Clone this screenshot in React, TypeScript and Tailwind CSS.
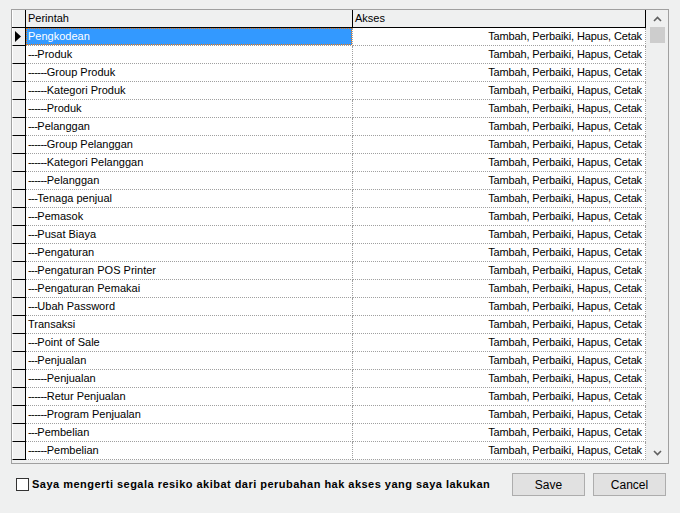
import React from 'react';

const rows: string[] = [
  'Pengkodean',
  '---Produk',
  '------Group Produk',
  '------Kategori Produk',
  '------Produk',
  '---Pelanggan',
  '------Group Pelanggan',
  '------Kategori Pelanggan',
  '------Pelanggan',
  '---Tenaga penjual',
  '---Pemasok',
  '---Pusat Biaya',
  '---Pengaturan',
  '---Pengaturan POS Printer',
  '---Pengaturan Pemakai',
  '---Ubah Password',
  'Transaksi',
  '---Point of Sale',
  '---Penjualan',
  '------Penjualan',
  '------Retur Penjualan',
  '------Program Penjualan',
  '---Pembelian',
  '------Pembelian',
];

const AKSES = 'Tambah, Perbaiki, Hapus, Cetak';

// split leading dashes so they can be drawn a bit tighter, like the old grid font
const Label = ({ text }: { text: string }) => {
  const m = text.match(/^(-*)(.*)$/);
  const dashes = m ? m[1] : '';
  const rest = m ? m[2] : text;
  return (
    <>
      {dashes && <span className="tracking-[-0.55px]">{dashes}</span>}
      {rest}
    </>
  );
};

const Chevron = ({ down = false }: { down?: boolean }) => (
  <svg width="9" height="6" viewBox="0 0 9 6" className={down ? 'rotate-180' : ''}>
    <path d="M1 5 L4.5 1.5 L8 5" fill="none" stroke="#606060" strokeWidth="1.6" />
  </svg>
);

const App: React.FC = () => {
  return (
    <div
      className="w-[680px] h-[513px] bg-[#eff0f0] text-[11px] text-black pt-[9px] px-[11px]"
      style={{ fontFamily: '"Liberation Sans", Arial, sans-serif' }}
    >
      {/* grid box */}
      <div className="flex h-[455px] border border-[#a0a0a0]">
        <div className="flex flex-col w-[634px]">
          {/* header */}
          <div className="flex h-[18px] border-b border-black">
            <div className="w-[14px] border-r border-black border-l border-l-white" />
            <div className="w-[327px] border-r border-black pl-[2px] leading-[17px]">Perintah</div>
            <div className="w-[293px] border-r border-black pl-[2px] leading-[17px]">Akses</div>
          </div>
          {rows.map((label, i) => (
            <div key={i} className="flex h-[18px]">
              <div className="w-[14px] bg-[#f0f0f0] border-l border-l-white border-r border-b border-black flex items-center pl-[2px]">
                {i === 0 && (
                  <svg width="7" height="11" viewBox="0 0 7 11">
                    <path d="M0 0 L6 5.5 L0 11 Z" fill="#000" />
                  </svg>
                )}
              </div>
              {i === 0 ? (
                <div className="w-[327px] border-r border-b border-dotted border-[#a0a0a0] bg-white">
                  <div className="h-[17px] bg-[#3399ff] text-white border border-dotted border-[#e8740c] pl-[1px] leading-[15px]">
                    {label}
                  </div>
                </div>
              ) : (
                <div className="w-[327px] border-r border-b border-dotted border-[#a0a0a0] bg-white pl-[2px] leading-[17px] whitespace-nowrap">
                  <Label text={label} />
                </div>
              )}
              <div className="w-[293px] border-r border-b border-dotted border-[#a0a0a0] bg-white pr-[3px] text-right leading-[17px] whitespace-nowrap tracking-[-0.13px]">
                {AKSES}
              </div>
            </div>
          ))}
        </div>
        {/* scrollbar */}
        <div className="w-[23px] flex flex-col items-center">
          <div className="h-[17px] flex items-center justify-center pl-[1px]">
            <Chevron />
          </div>
          <div className="w-[15px] h-[16px] bg-[#cdcdcd] ml-[1px]" />
          <div className="flex-1" />
          <div className="h-[17px] flex items-center justify-center pl-[1px] pb-[4px]">
            <Chevron down />
          </div>
        </div>
      </div>

      {/* bottom bar */}
      <div className="flex items-center justify-between mt-[9px] h-[23px]">
        <label className="flex items-center ml-[5px]">
          <span className="w-[13px] h-[13px] bg-white border border-[#333333]" />
          <span className="ml-[3px] font-bold tracking-[0.48px]">
            Saya mengerti segala resiko akibat dari perubahan hak akses yang saya lakukan
          </span>
        </label>
        <div className="flex gap-[8px] mr-[3px]">
          <button className="w-[73px] h-[23px] bg-[#e1e1e1] border border-[#adadad] text-[12px]">Save</button>
          <button className="w-[73px] h-[23px] bg-[#e1e1e1] border border-[#adadad] text-[12px]">Cancel</button>
        </div>
      </div>
    </div>
  );
};

export default App;
